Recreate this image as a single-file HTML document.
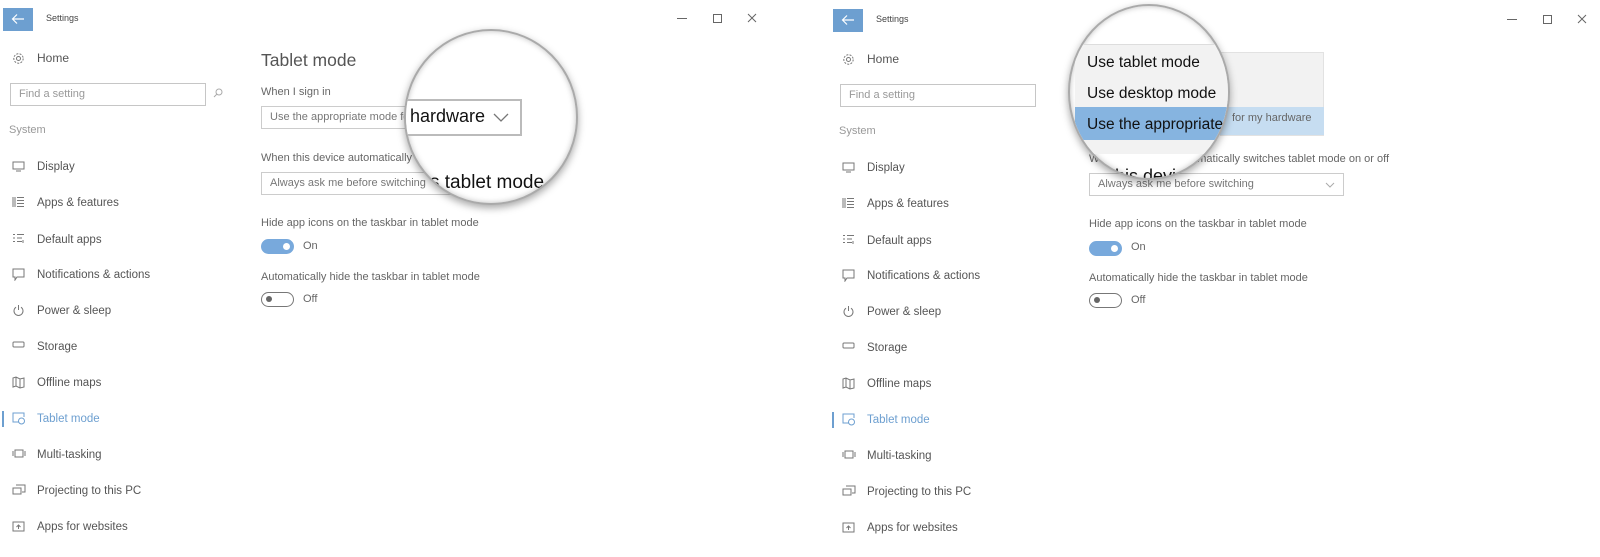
<!DOCTYPE html>
<html><head><meta charset="utf-8"><style>
*{margin:0;padding:0;box-sizing:border-box}
body{width:1600px;height:556px;background:#fff;font-family:"Liberation Sans",sans-serif;color:#333;overflow:hidden;position:relative}
.a{position:absolute;white-space:nowrap}
.nav{font-size:11.5px;color:#555;line-height:14px}
.lbl{font-size:11px;color:#666;line-height:13px}
.dd{position:absolute;border:1px solid #ccc;background:#fff;font-size:11px;color:#777;line-height:20px;padding-left:8px}
.tog{position:absolute;width:33px;height:15px;border-radius:8px}
.on{background:#78a9dc}
.on::after{content:"";position:absolute;right:4px;top:4px;width:7px;height:7px;border-radius:50%;background:#fff}
.off{border:1.5px solid #777}
.off::after{content:"";position:absolute;left:4px;top:3px;width:6px;height:6px;border-radius:50%;background:#666}
.circle{position:absolute;border-radius:50%;overflow:hidden;background:#fff;border:2px solid #aaa;box-shadow:0 3px 8px rgba(0,0,0,.35),inset 0 0 6px rgba(0,0,0,.25)}
</style></head><body>

<div class="a" style="left:0;top:0;width:800px;height:556px">
 <div class="a" style="left:3px;top:8px;width:30px;height:23px;background:#6d9fd0"></div>
 <svg class="a" style="left:11px;top:13px" width="14" height="12" viewBox="0 0 14 12"><path d="M13 6H2M6 1.5L1.5 6 6 10.5" stroke="#fff" stroke-width="1.2" fill="none"/></svg>
 <div class="a" style="left:46px;top:13px;font-size:9px;color:#444">Settings</div>
 <div class="a" style="left:677px;top:18px;width:10px;height:1px;background:#666"></div>
 <div class="a" style="left:713px;top:14px;width:9px;height:9px;border:1px solid #666"></div>
 <svg class="a" style="left:747px;top:13px" width="10" height="10"><path d="M1 1L9 9M9 1L1 9" stroke="#666" stroke-width="1"/></svg>
</div>

<div class="a" style="left:830px;top:1px;width:770px;height:556px">
 <div class="a" style="left:3px;top:8px;width:30px;height:23px;background:#6d9fd0"></div>
 <svg class="a" style="left:11px;top:13px" width="14" height="12" viewBox="0 0 14 12"><path d="M13 6H2M6 1.5L1.5 6 6 10.5" stroke="#fff" stroke-width="1.2" fill="none"/></svg>
 <div class="a" style="left:46px;top:13px;font-size:9px;color:#444">Settings</div>
 <div class="a" style="left:677px;top:18px;width:10px;height:1px;background:#666"></div>
 <div class="a" style="left:713px;top:14px;width:9px;height:9px;border:1px solid #666"></div>
 <svg class="a" style="left:747px;top:13px" width="10" height="10"><path d="M1 1L9 9M9 1L1 9" stroke="#666" stroke-width="1"/></svg>
</div>

<div class="a" style="left:0;top:0">
 <svg class="a" style="left:12px;top:52px" width="13" height="13" viewBox="0 0 13 13"><circle cx="6.5" cy="6.5" r="2" fill="none" stroke="#777"/><circle cx="6.5" cy="6.5" r="4.7" fill="none" stroke="#777" stroke-dasharray="2 1.3"/></svg>
 <div class="a nav" style="left:37px;top:51px;font-size:12px">Home</div>
 <div class="a" style="left:10px;top:83px;width:196px;height:23px;border:1.5px solid #c6c6c6"></div>
 <div class="a" style="left:19px;top:88px;font-size:11px;color:#999">Find a setting</div>
 <svg class="a" style="left:213px;top:88px" width="10" height="10"><circle cx="6" cy="4" r="3" fill="none" stroke="#aaa"/><path d="M4 6L1 9" stroke="#aaa"/></svg>
 <div class="a" style="left:9px;top:124px;font-size:11px;color:#999">System</div>
 <svg class="a" style="left:12px;top:161px" width="13" height="11"><rect x="1" y="1" width="11" height="7" fill="none" stroke="#777"/><path d="M4 10h5" stroke="#777"/></svg>
 <div class="a nav" style="left:37px;top:160px">Display</div>
 <svg class="a" style="left:12px;top:196px" width="13" height="12"><path d="M1 1v10M3 1v10M5 1.5h7M5 4.5h7M5 7.5h7M5 10.5h7" stroke="#777"/></svg>
 <div class="a nav" style="left:37px;top:196px">Apps &amp; features</div>
 <svg class="a" style="left:12px;top:233px" width="13" height="12"><path d="M1 1.5h2M1 5h2M1 8.5h2M5 1.5h7M5 5h5M5 8.5h5M11 7v3" stroke="#777"/></svg>
 <div class="a nav" style="left:37px;top:233px">Default apps</div>
 <svg class="a" style="left:12px;top:268px" width="13" height="13"><path d="M1 1h11v8H5l-2 3V9H1z" fill="none" stroke="#777"/></svg>
 <div class="a nav" style="left:37px;top:268px">Notifications &amp; actions</div>
 <svg class="a" style="left:12px;top:304px" width="13" height="13"><path d="M4 3.2A4.5 4.5 0 1 0 9 3.2M6.5 1v5" fill="none" stroke="#777"/></svg>
 <div class="a nav" style="left:37px;top:304px">Power &amp; sleep</div>
 <svg class="a" style="left:12px;top:341px" width="13" height="8"><rect x="1" y="1" width="11" height="5" rx="1" fill="none" stroke="#777"/></svg>
 <div class="a nav" style="left:37px;top:340px">Storage</div>
 <svg class="a" style="left:12px;top:376px" width="14" height="13"><path d="M1 2l3-1 4 2 4-1v9l-4 1-4-2-3 1zM4 1v9M8 3v9" fill="none" stroke="#777"/></svg>
 <div class="a nav" style="left:37px;top:376px">Offline maps</div>
 <div class="a" style="left:2px;top:411px;width:2px;height:16px;background:#6d9fd0"></div>
 <svg class="a" style="left:12px;top:412px" width="14" height="13"><path d="M7 10H1V1h11v4" fill="none" stroke="#6d9fd0"/><circle cx="9.5" cy="9" r="3" fill="none" stroke="#6d9fd0"/></svg>
 <div class="a nav" style="left:37px;top:412px;color:#6d9fd0">Tablet mode</div>
 <svg class="a" style="left:12px;top:449px" width="14" height="10"><rect x="3" y="1" width="8" height="7" fill="none" stroke="#777"/><path d="M1 2v5M13 2v5" stroke="#777"/></svg>
 <div class="a nav" style="left:37px;top:448px">Multi-tasking</div>
 <svg class="a" style="left:12px;top:484px" width="14" height="12"><path d="M4 1h9v7H10M1 4h8v6H1z" fill="none" stroke="#777"/></svg>
 <div class="a nav" style="left:37px;top:484px">Projecting to this PC</div>
 <svg class="a" style="left:12px;top:521px" width="13" height="11"><rect x="1" y="1" width="11" height="9" fill="none" stroke="#777"/><path d="M6.5 8V4M4.5 6l2-2 2 2" fill="none" stroke="#777"/></svg>
 <div class="a nav" style="left:37px;top:520px">Apps for websites</div>
</div>

<div class="a" style="left:830px;top:1px;width:300px;height:556px">
 <svg class="a" style="left:12px;top:52px" width="13" height="13" viewBox="0 0 13 13"><circle cx="6.5" cy="6.5" r="2" fill="none" stroke="#777"/><circle cx="6.5" cy="6.5" r="4.7" fill="none" stroke="#777" stroke-dasharray="2 1.3"/></svg>
 <div class="a nav" style="left:37px;top:51px;font-size:12px">Home</div>
 <div class="a" style="left:10px;top:83px;width:196px;height:23px;border:1.5px solid #c6c6c6"></div>
 <div class="a" style="left:19px;top:88px;font-size:11px;color:#999">Find a setting</div>
 <div class="a" style="left:9px;top:124px;font-size:11px;color:#999">System</div>
 <svg class="a" style="left:12px;top:161px" width="13" height="11"><rect x="1" y="1" width="11" height="7" fill="none" stroke="#777"/><path d="M4 10h5" stroke="#777"/></svg>
 <div class="a nav" style="left:37px;top:160px">Display</div>
 <svg class="a" style="left:12px;top:196px" width="13" height="12"><path d="M1 1v10M3 1v10M5 1.5h7M5 4.5h7M5 7.5h7M5 10.5h7" stroke="#777"/></svg>
 <div class="a nav" style="left:37px;top:196px">Apps &amp; features</div>
 <svg class="a" style="left:12px;top:233px" width="13" height="12"><path d="M1 1.5h2M1 5h2M1 8.5h2M5 1.5h7M5 5h5M5 8.5h5M11 7v3" stroke="#777"/></svg>
 <div class="a nav" style="left:37px;top:233px">Default apps</div>
 <svg class="a" style="left:12px;top:268px" width="13" height="13"><path d="M1 1h11v8H5l-2 3V9H1z" fill="none" stroke="#777"/></svg>
 <div class="a nav" style="left:37px;top:268px">Notifications &amp; actions</div>
 <svg class="a" style="left:12px;top:304px" width="13" height="13"><path d="M4 3.2A4.5 4.5 0 1 0 9 3.2M6.5 1v5" fill="none" stroke="#777"/></svg>
 <div class="a nav" style="left:37px;top:304px">Power &amp; sleep</div>
 <svg class="a" style="left:12px;top:341px" width="13" height="8"><rect x="1" y="1" width="11" height="5" rx="1" fill="none" stroke="#777"/></svg>
 <div class="a nav" style="left:37px;top:340px">Storage</div>
 <svg class="a" style="left:12px;top:376px" width="14" height="13"><path d="M1 2l3-1 4 2 4-1v9l-4 1-4-2-3 1zM4 1v9M8 3v9" fill="none" stroke="#777"/></svg>
 <div class="a nav" style="left:37px;top:376px">Offline maps</div>
 <div class="a" style="left:2px;top:411px;width:2px;height:16px;background:#6d9fd0"></div>
 <svg class="a" style="left:12px;top:412px" width="14" height="13"><path d="M7 10H1V1h11v4" fill="none" stroke="#6d9fd0"/><circle cx="9.5" cy="9" r="3" fill="none" stroke="#6d9fd0"/></svg>
 <div class="a nav" style="left:37px;top:412px;color:#6d9fd0">Tablet mode</div>
 <svg class="a" style="left:12px;top:449px" width="14" height="10"><rect x="3" y="1" width="8" height="7" fill="none" stroke="#777"/><path d="M1 2v5M13 2v5" stroke="#777"/></svg>
 <div class="a nav" style="left:37px;top:448px">Multi-tasking</div>
 <svg class="a" style="left:12px;top:484px" width="14" height="12"><path d="M4 1h9v7H10M1 4h8v6H1z" fill="none" stroke="#777"/></svg>
 <div class="a nav" style="left:37px;top:484px">Projecting to this PC</div>
 <svg class="a" style="left:12px;top:521px" width="13" height="11"><rect x="1" y="1" width="11" height="9" fill="none" stroke="#777"/><path d="M6.5 8V4M4.5 6l2-2 2 2" fill="none" stroke="#777"/></svg>
 <div class="a nav" style="left:37px;top:520px">Apps for websites</div>
</div>

<!-- LEFT main -->
<div class="a" style="left:261px;top:50px;font-size:17.5px;color:#555">Tablet mode</div>
<div class="a lbl" style="left:261px;top:86px">When I sign in</div>
<div class="dd" style="left:261px;top:106px;width:260px;height:23px">Use the appropriate mode for my hardware</div>
<div class="a lbl" style="left:261px;top:152px">When this device automatically switches tablet mode on or off</div>
<div class="dd" style="left:261px;top:172px;width:260px;height:23px">Always ask me before switching</div>
<div class="a lbl" style="left:261px;top:217px">Hide app icons on the taskbar in tablet mode</div>
<div class="tog on" style="left:261px;top:239px"></div>
<div class="a lbl" style="left:303px;top:240px">On</div>
<div class="a lbl" style="left:261px;top:271px">Automatically hide the taskbar in tablet mode</div>
<div class="tog off" style="left:261px;top:292px"></div>
<div class="a lbl" style="left:303px;top:293px">Off</div>

<div class="circle" style="left:404px;top:29px;width:174px;height:176px">
 <div class="a" style="left:-4px;top:68px;width:120px;height:37px;border:2px solid #bbb;background:#fff"></div>
 <div class="a" style="left:4px;top:75px;font-size:18px;color:#111">hardware</div>
 <svg class="a" style="left:87px;top:82px" width="16" height="10"><path d="M1 1l7 7 7-7" fill="none" stroke="#777" stroke-width="1.3"/></svg>
 <div class="a" style="left:24px;top:141px;font-size:19px;color:#111">s tablet mode</div>
</div>

<!-- RIGHT main -->
<div class="a" style="left:1220px;top:52px;width:104px;height:84px;background:#f2f2f2;border:1px solid #e2e2e2"></div>
<div class="a" style="left:1220px;top:107px;width:104px;height:28px;background:#c6ddf1"></div>
<div class="a" style="left:1232px;top:112px;font-size:11px;color:#666">for my hardware</div>
<div class="a lbl" style="left:1089px;top:153px">When this device automatically switches tablet mode on or off</div>
<div class="dd" style="left:1089px;top:173px;width:255px;height:23px">Always ask me before switching<svg style="position:absolute;right:8px;top:8px" width="10" height="6"><path d="M1 1l4 4 4-4" fill="none" stroke="#aaa"/></svg></div>
<div class="a lbl" style="left:1089px;top:218px">Hide app icons on the taskbar in tablet mode</div>
<div class="tog on" style="left:1089px;top:241px"></div>
<div class="a lbl" style="left:1131px;top:241px">On</div>
<div class="a lbl" style="left:1089px;top:272px">Automatically hide the taskbar in tablet mode</div>
<div class="tog off" style="left:1089px;top:293px"></div>
<div class="a lbl" style="left:1131px;top:294px">Off</div>

<div class="circle" style="left:1068px;top:4px;width:162px;height:176px">
 <div class="a" style="left:5px;top:38px;width:170px;height:110px;background:#f2f2f2;border-top:1px solid #ddd"></div>
 <div class="a" style="left:17px;top:48px;font-size:15.5px;color:#111">Use tablet mode</div>
 <div class="a" style="left:17px;top:79px;font-size:15.5px;color:#111">Use desktop mode</div>
 <div class="a" style="left:5px;top:101px;width:170px;height:33px;background:#86b4e0"></div>
 <div class="a" style="left:17px;top:110px;font-size:15.5px;color:#111">Use the appropriate m</div>
 <div class="a" style="left:40px;top:160px;font-size:18px;color:#111">this devi</div>
</div>

</body></html>
